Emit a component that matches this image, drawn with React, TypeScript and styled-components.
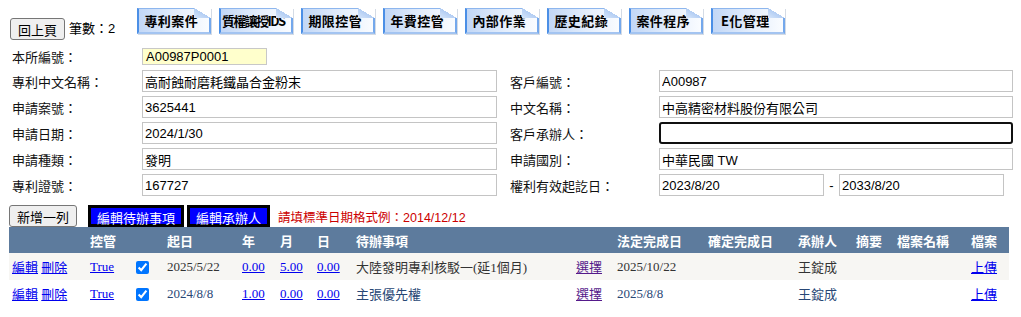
import React from 'react';
import styled, {createGlobalStyle} from 'styled-components';

const GlobalStyle = createGlobalStyle`
  html, body {
    overflow: hidden;
  }

  body {
    margin: 8px;
    font-family: "Liberation Sans", "Noto Sans CJK TC", sans-serif;
    font-size: 13px;
    color: #000;
    background: #ffffff;
  }
`;

const TopBar = styled.div`
  display: flex;
  align-items: flex-start;
  height: 36px;
`;

const PlainButton = styled.button<{$left?: number, $top?: number}>`
  box-sizing: border-box;
  height: 22px;
  margin-top: ${({$top}) => $top || 0}px;
  margin-left: ${({$left}) => $left || 0}px;
  padding: 0 7px;

  font: 13px "Noto Sans CJK TC", sans-serif;
  color: #000000;

  background: #efefef;
  border: 1px solid #767676;
  border-radius: 3px;
`;

const Count = styled.span`
  margin-top: 10px;
  margin-left: 4px;
  line-height: 22px;
  white-space: nowrap;
`;

const Tabs = styled.div`
  display: flex;
  margin-left: 22px;
`;

const Tab = styled.div<{$tight?: boolean}>`
  position: relative;
  box-sizing: border-box;
  display: flex;
  align-items: center;
  justify-content: center;

  width: 74px;
  height: 26px;
  margin-right: 8px;
  padding-right: 6px;

  font: bold 13px "Noto Sans CJK TC", sans-serif;
  letter-spacing: ${({$tight}) => $tight ? `-1.6px` : `0.4px`};
  white-space: nowrap;

  border-left: 2px solid #4b8fe6;
  border-top: 1px solid #8db6ee;
  border-right: 2px solid #74a8ec;
  border-bottom: 2px solid #a3c4f1;
  background: linear-gradient(90deg, #c2d7f6 0%, #e4eefc 55%, #fafcff 100%);
  box-shadow: 1px 1px 0 #d4dbe5;

  &::after {
    content: '';
    position: absolute;
    top: -1px;
    right: -2px;
    width: 17px;
    height: 10px;
    background: linear-gradient(to bottom left, #ffffff 50%, #b2cdf3 50%, #d6e5fa 100%);
  }
`;

const Form = styled.div`
  display: grid;
  grid-template-columns: 134px 355px 162px 354px;
  grid-template-rows: 24px repeat(5, 26px);
  align-items: center;
`;

const Label = styled.div<{$right?: boolean}>`
  padding-left: ${({$right}) => $right ? `13px` : `4px`};
  white-space: nowrap;
  color: #111111;
`;

const CaseNo = styled.div`
  box-sizing: border-box;
  width: 125px;
  height: 17px;
  padding-left: 3px;

  line-height: 15px;
  color: #000000;

  background: #ffffcc;
  border: 1px solid #c8c8c8;
`;

const Field = styled.input<{$focused?: boolean, $w?: number}>`
  box-sizing: border-box;
  width: ${({$w}) => $w ? `${$w}px` : `100%`};
  height: 22px;
  padding: 1px 2px;

  font: 13px "Liberation Sans", "Noto Sans CJK TC", sans-serif;
  color: #000000;

  background: #ffffff;
  border: ${({$focused}) => $focused ? `2px solid #101010` : `1px solid #c4c4c4`};
  border-radius: ${({$focused}) => $focused ? `3px` : `0`};
  outline: none;
`;

const Range = styled.div`
  display: flex;
  align-items: center;
`;

const Dash = styled.span`
  width: 15px;
  text-align: center;
`;

const Actions = styled.div`
  display: flex;
  align-items: center;
  height: 22px;
  margin-top: 7px;
`;

const BlueButton = styled.button<{$left: number}>`
  box-sizing: border-box;
  height: 22px;
  margin-left: ${({$left}) => $left}px;
  padding: 0 6px;

  font: 13px "Noto Sans CJK TC", sans-serif;
  color: #ffffff;

  background: #0000ff;
  border: 3px solid #000000;
`;

const Hint = styled.span`
  margin-left: 8px;
  font-size: 12.5px;
  color: #cc0000;
  white-space: nowrap;
`;

const Grid = styled.table`
  width: 1000px;
  margin-left: 1px;
  border-collapse: collapse;
  table-layout: fixed;
`;

const Col = styled.col<{$w: number}>`
  width: ${({$w}) => $w}px;
`;

const HeadCell = styled.th`
  height: 26px;
  padding: 0 0 0 3px;

  text-align: left;
  font: bold 13px "Noto Sans CJK TC", sans-serif;
  color: #ffffff;
  white-space: nowrap;

  background: #5d7b9d;
`;

const Row = styled.tr<{$alt?: boolean}>`
  background: ${({$alt}) => $alt ? `#ffffff` : `#f7f6f3`};
  color: ${({$alt}) => $alt ? `#284775` : `#333333`};
`;

const Cell = styled.td`
  height: 27px;
  padding: 0 0 0 3px;

  font: 13px "Liberation Serif", "Noto Sans CJK TC", serif;
  white-space: nowrap;
`;

const Link = styled.a<{$visited?: boolean}>`
  color: ${({$visited}) => $visited ? `#551a8b` : `#0000ee`};
  text-decoration: underline;
  cursor: pointer;
`;

const Check = styled.input`
  width: 13px;
  height: 13px;
  margin: 0;
  vertical-align: middle;
`;

const tabs = [`專利案件`, `質權讓授IDS`, `期限控管`, `年費控管`, `內部作業`, `歷史紀錄`, `案件程序`, `E化管理`];

const columns = [
  {title: ``, w: 78},
  {title: `控管`, w: 46},
  {title: ``, w: 31},
  {title: `起日`, w: 75},
  {title: `年`, w: 38},
  {title: `月`, w: 37},
  {title: `日`, w: 39},
  {title: `待辦事項`, w: 220},
  {title: ``, w: 41},
  {title: `法定完成日`, w: 91},
  {title: `確定完成日`, w: 90},
  {title: `承辦人`, w: 58},
  {title: `摘要`, w: 41},
  {title: `檔案名稱`, w: 74},
  {title: `檔案`, w: 41},
];

const todos = [
  {start: `2025/5/22`, y: `0.00`, m: `5.00`, d: `0.00`, item: `大陸發明專利核駁一(延1個月)`, due: `2025/10/22`, owner: `王錠成`},
  {start: `2024/8/8`, y: `1.00`, m: `0.00`, d: `0.00`, item: `主張優先權`, due: `2025/8/8`, owner: `王錠成`},
];

const App: React.FunctionComponent = () => {
  return (
    <>
      <GlobalStyle />
      <TopBar>
        <PlainButton $left={2} $top={10}>回上頁</PlainButton>
        <Count>筆數：2</Count>
        <Tabs>
          {tabs.map((tab) => (
            <Tab key={tab} $tight={tab.length > 6}>{tab}</Tab>
          ))}
        </Tabs>
      </TopBar>

      <Form>
        <Label>本所編號：</Label>
        <CaseNo>A00987P0001</CaseNo>
        <div />
        <div />

        <Label>專利中文名稱：</Label>
        <Field defaultValue="高耐蝕耐磨耗鐵晶合金粉末" />
        <Label $right>客戶編號：</Label>
        <Field defaultValue="A00987" />

        <Label>申請案號：</Label>
        <Field defaultValue="3625441" />
        <Label $right>中文名稱：</Label>
        <Field defaultValue="中高精密材料股份有限公司" />

        <Label>申請日期：</Label>
        <Field defaultValue="2024/1/30" />
        <Label $right>客戶承辦人：</Label>
        <Field $focused autoFocus defaultValue="" />

        <Label>申請種類：</Label>
        <Field defaultValue="發明" />
        <Label $right>申請國別：</Label>
        <Field defaultValue="中華民國 TW" />

        <Label>專利證號：</Label>
        <Field defaultValue="167727" />
        <Label $right>權利有效起訖日：</Label>
        <Range>
          <Field $w={165} defaultValue="2023/8/20" />
          <Dash>-</Dash>
          <Field $w={165} defaultValue="2033/8/20" />
        </Range>
      </Form>

      <Actions>
        <PlainButton $left={1}>新增一列</PlainButton>
        <BlueButton $left={11}>編輯待辦事項</BlueButton>
        <BlueButton $left={3}>編輯承辦人</BlueButton>
        <Hint>請填標準日期格式例：2014/12/12</Hint>
      </Actions>

      <Grid>
        <colgroup>
          {columns.map((col, i) => <Col key={i} $w={col.w} />)}
        </colgroup>
        <thead>
          <tr>
            {columns.map((col, i) => <HeadCell key={i}>{col.title}</HeadCell>)}
          </tr>
        </thead>
        <tbody>
          {todos.map((todo, i) => (
            <Row key={i} $alt={i % 2 === 1}>
              <Cell><Link>編輯</Link> <Link>刪除</Link></Cell>
              <Cell><Link>True</Link></Cell>
              <Cell><Check type="checkbox" defaultChecked /></Cell>
              <Cell>{todo.start}</Cell>
              <Cell><Link>{todo.y}</Link></Cell>
              <Cell><Link>{todo.m}</Link></Cell>
              <Cell><Link>{todo.d}</Link></Cell>
              <Cell>{todo.item}</Cell>
              <Cell><Link $visited>選擇</Link></Cell>
              <Cell>{todo.due}</Cell>
              <Cell></Cell>
              <Cell>{todo.owner}</Cell>
              <Cell></Cell>
              <Cell></Cell>
              <Cell><Link>上傳</Link></Cell>
            </Row>
          ))}
        </tbody>
      </Grid>
    </>
  );
};

export default App;
